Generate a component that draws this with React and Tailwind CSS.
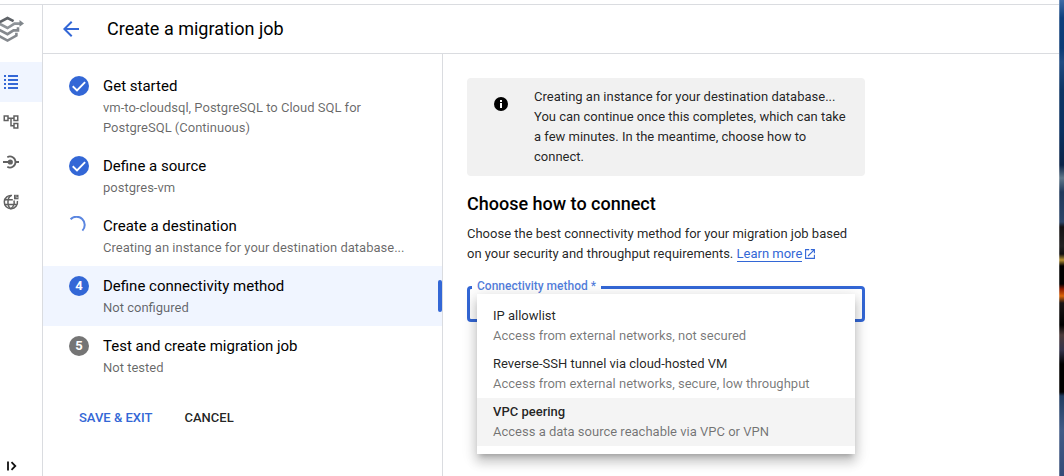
import React from 'react';
import { MdOutlineAccountTree, MdArrowBack } from 'react-icons/md';

const steps = [
  { title: 'Get started', lines: ['vm-to-cloudsql, PostgreSQL to Cloud SQL for', 'PostgreSQL (Continuous)'], state: 'done' },
  { title: 'Define a source', lines: ['postgres-vm'], state: 'done' },
  { title: 'Create a destination', lines: ['Creating an instance for your destination database...'], state: 'loading' },
  { title: 'Define connectivity method', lines: ['Not configured'], state: 'active', number: 4 },
  { title: 'Test and create migration job', lines: ['Not tested'], state: 'todo', number: 5 },
];

const options = [
  { title: 'IP allowlist', detail: 'Access from external networks, not secured' },
  { title: 'Reverse-SSH tunnel via cloud-hosted VM', detail: 'Access from external networks, secure, low throughput' },
  { title: 'VPC peering', detail: 'Access a data source reachable via VPC or VPN', selected: true },
];

function Logo() {
  return (
    <svg width="24" height="27" viewBox="0 0 24 27" fill="none" strokeWidth="2.6">
      <path d="M-2 7 L7.5 2 L13.6 5.2" stroke="#5f6368" />
      <path d="M-2 7 L7.5 12 L14.5 7.6 H20" stroke="#8f9499" />
      <path d="M19.5 4 L24 7.4 L19.5 10.8 Z" fill="#80868b" />
      <path d="M-2 13.2 L7.5 18.2 L13.5 14.4 H18 V11.2" stroke="#85898e" />
      <path d="M-2 19.4 L7.5 24.6 L16.4 19.6 V16.8" stroke="#85898e" />
    </svg>
  );
}

function ListIcon() {
  return (
    <svg width="14" height="14" viewBox="0 0 14 14" fill="#3367d6">
      <path d="M0 0h2v2H0zM4 0h10v2H4zM0 4h2v2H0zM4 4h10v2H4zM0 8h2v2H0zM4 8h10v2H4zM0 12h2v2H0zM4 12h10v2H4z" />
    </svg>
  );
}

function ConnectIcon() {
  return (
    <svg width="16" height="14" viewBox="0 0 16 14" fill="none" stroke="#616161" strokeWidth="1.8">
      <path d="M4.3 2.2A5.5 5.5 0 1 1 4.3 11.8" />
      <path d="M0 7H6M12.5 7H16" />
      <circle cx="7.3" cy="7" r="2.6" fill="#616161" stroke="none" />
    </svg>
  );
}

function GlobeIcon() {
  return (
    <svg width="16" height="16" viewBox="0 0 16 16" fill="none" stroke="#616161" strokeWidth="1.5">
      <path d="M9 1.6A6.6 6.6 0 1 0 14.4 7" />
      <path d="M7.8 1.6C4 4 4 12.4 7.8 14.6C11.2 12.4 11.6 9.5 11 6.5M1.8 5.8H9.8M1.8 10.4H13.8" />
      <path d="M11 0.8h4.5V5.3H11z" fill="#616161" stroke="none" />
      <path d="M13 1.2v2.4h2.5" stroke="#bdbdbd" strokeWidth="0.8" />
    </svg>
  );
}

function StepMark({ step }) {
  if (step.state === 'done') {
    return (
      <svg className="shrink-0" width="20" height="20" viewBox="0 0 20 20">
        <circle cx="10" cy="10" r="10" fill="#3367d6" />
        <path d="M3.7 10.3L8 14.4L16.1 6.1" fill="none" stroke="#fff" strokeWidth="1.9" />
      </svg>
    );
  }
  if (step.state === 'loading') {
    return (
      <svg className="shrink-0" width="20" height="20" viewBox="0 0 20 20" fill="none">
        <path d="M1.6 3.2A7.8 7.8 0 0 1 13.4 14.6" stroke="#5b86e0" strokeWidth="2" />
      </svg>
    );
  }
  return (
    <span className={`flex size-5 shrink-0 items-center justify-center rounded-full text-[13px] font-bold text-white ${step.state === 'active' ? 'bg-[#3367d6]' : 'bg-[#757575]'}`}>
      {step.number}
    </span>
  );
}

function Rail() {
  return (
    <nav className="flex w-[43px] shrink-0 flex-col border-r border-[#dadce0]">
      <div className="h-[57px] pt-[11px]"><Logo /></div>
      <div className="flex h-10 items-center bg-[#f0f5ff] pl-1"><ListIcon /></div>
      <div className="flex h-10 items-center pl-[2px]"><MdOutlineAccountTree size={18} color="#616161" /></div>
      <div className="flex h-10 items-center pl-[3px]"><ConnectIcon /></div>
      <div className="flex h-10 items-center pl-[3px]"><GlobeIcon /></div>
      <div className="mt-auto pb-[5px] pl-[7px]">
        <svg width="10" height="10" viewBox="0 0 10 10" fill="none" stroke="#111" strokeWidth="1.8">
          <path d="M1 0.5V9.5M4.5 1.2L8.3 5L4.5 8.8" />
        </svg>
      </div>
    </nav>
  );
}

function Stepper() {
  return (
    <aside className="w-[400px] shrink-0 border-r border-[#dadce0] pt-3">
      {steps.map((step) => (
        <div key={step.title} className={`flex gap-[14px] pt-[10px] pb-2 pl-[26px] ${step.state === 'active' ? 'bg-[#f0f5ff]' : ''}`}>
          <StepMark step={step} />
          <div className="grow">
            <div className="mb-[2px] text-[15px] leading-5">{step.title}</div>
            {step.lines.map((line) => (
              <div key={line} className="text-[13px] leading-5 whitespace-nowrap text-black/60">{line}</div>
            ))}
          </div>
          {step.state === 'active' && <div className="mt-1 h-8 w-1 rounded-[2px] bg-[#3367d6]" />}
        </div>
      ))}
      <div className="mt-[22px] flex gap-8 pl-9 text-[13px] leading-5 font-medium">
        <button className="text-[#3367d6]">SAVE &amp; EXIT</button>
        <button className="text-black/87">CANCEL</button>
      </div>
    </aside>
  );
}

function Connectivity() {
  return (
    <section className="w-[422px] pt-6 pl-6">
      <div className="flex h-[98px] rounded-[4px] bg-[#f1f1f1] pt-[9px] pl-[27px]">
        <svg className="mt-[10px] shrink-0" width="14" height="14" viewBox="0 0 14 14">
          <circle cx="7" cy="7" r="7" fill="#000" />
          <path d="M6 3h2v2H6zM6 6h2v5H6z" fill="#fff" />
        </svg>
        <p className="ml-[26px] text-[13px] leading-5 whitespace-nowrap text-black/87">
          Creating an instance for your destination database...<br />
          You can continue once this completes, which can take<br />
          a few minutes. In the meantime, choose how to<br />
          connect.
        </p>
      </div>
      <h2 className="mt-4 text-[18px] leading-6 font-medium">Choose how to connect</h2>
      <p className="mt-2 text-[13px] leading-5 whitespace-nowrap text-black/87">
        Choose the best connectivity method for your migration job based<br />
        on your security and throughput requirements.{' '}
        <a className="border-b border-[#3367d6] text-[#3367d6]">Learn more</a>
        <svg className="ml-[3px] inline-block align-[-1px]" width="10" height="10" viewBox="0 0 10 10" fill="none" stroke="#3367d6" strokeWidth="1.1">
          <path d="M4.2 0.6H0.6V9.4H9.4V5.8M5.8 0.6H9.4V4.2M9.2 0.8L3 7" />
        </svg>
      </p>
      <div className="relative mt-[22px] h-9 rounded-[4px] border-3 border-[#3367d6]">
        <span className="absolute -top-[11px] left-[2px] bg-white pr-[5px] pl-[5px] text-[12px] leading-4 font-medium whitespace-nowrap text-[#3367d6]/85">Connectivity method *</span>
        <div className="absolute top-[5px] left-[7px] w-[378px] bg-white py-2 shadow-[0_5px_5px_-3px_rgba(0,0,0,0.2),0_8px_10px_1px_rgba(0,0,0,0.14),0_3px_14px_2px_rgba(0,0,0,0.12)]">
          {options.map((option) => (
            <div key={option.title} className={`h-12 px-4 py-1 text-[13px] leading-5 ${option.selected ? 'bg-[#f4f4f4]' : ''}`}>
              <div className={option.selected ? 'font-medium text-black/87' : 'text-black/87'}>{option.title}</div>
              <div className="text-black/54">{option.detail}</div>
            </div>
          ))}
        </div>
      </div>
    </section>
  );
}

export default function App() {
  return (
    <div className="flex h-[476px] w-[1064px] overflow-hidden bg-white font-[Roboto,sans-serif] text-black">
      <div className="flex w-[1059px] flex-col">
        <div className="h-[5px] shrink-0 border-b border-[#dadce0]" />
        <div className="flex grow">
          <Rail />
          <div className="flex grow flex-col">
            <header className="flex h-[49px] shrink-0 items-center border-b border-[#dadce0] pb-px pl-4">
              <MdArrowBack size={24} color="#3367d6" />
              <h1 className="mt-px ml-6 text-[18px] leading-6">Create a migration job</h1>
            </header>
            <main className="flex grow">
              <Stepper />
              <Connectivity />
            </main>
          </div>
        </div>
      </div>
      <div className="w-[5px] border-l border-white/25 bg-[linear-gradient(to_bottom,#3f6ba5_0px,#0d3f7c_18px,#0b3a75_48px,#214b82_62px,#0d3564_90px,#0a3060_130px,#0b2347_165px,#60788a_178px,#20395b_192px,#2c4568_222px,#141214_227px,#222_246px,#111_254px,#b89335_260px,#000_266px,#000_284px,#8b1a00_289px,#d96507_296px,#1a1515_303px,#000_325px,#4c3a3a_335px,#34334a_350px,#000_364px,#000_392px,#213c60_396px,#425b86_430px,#334b77_476px)]" />
    </div>
  );
}
